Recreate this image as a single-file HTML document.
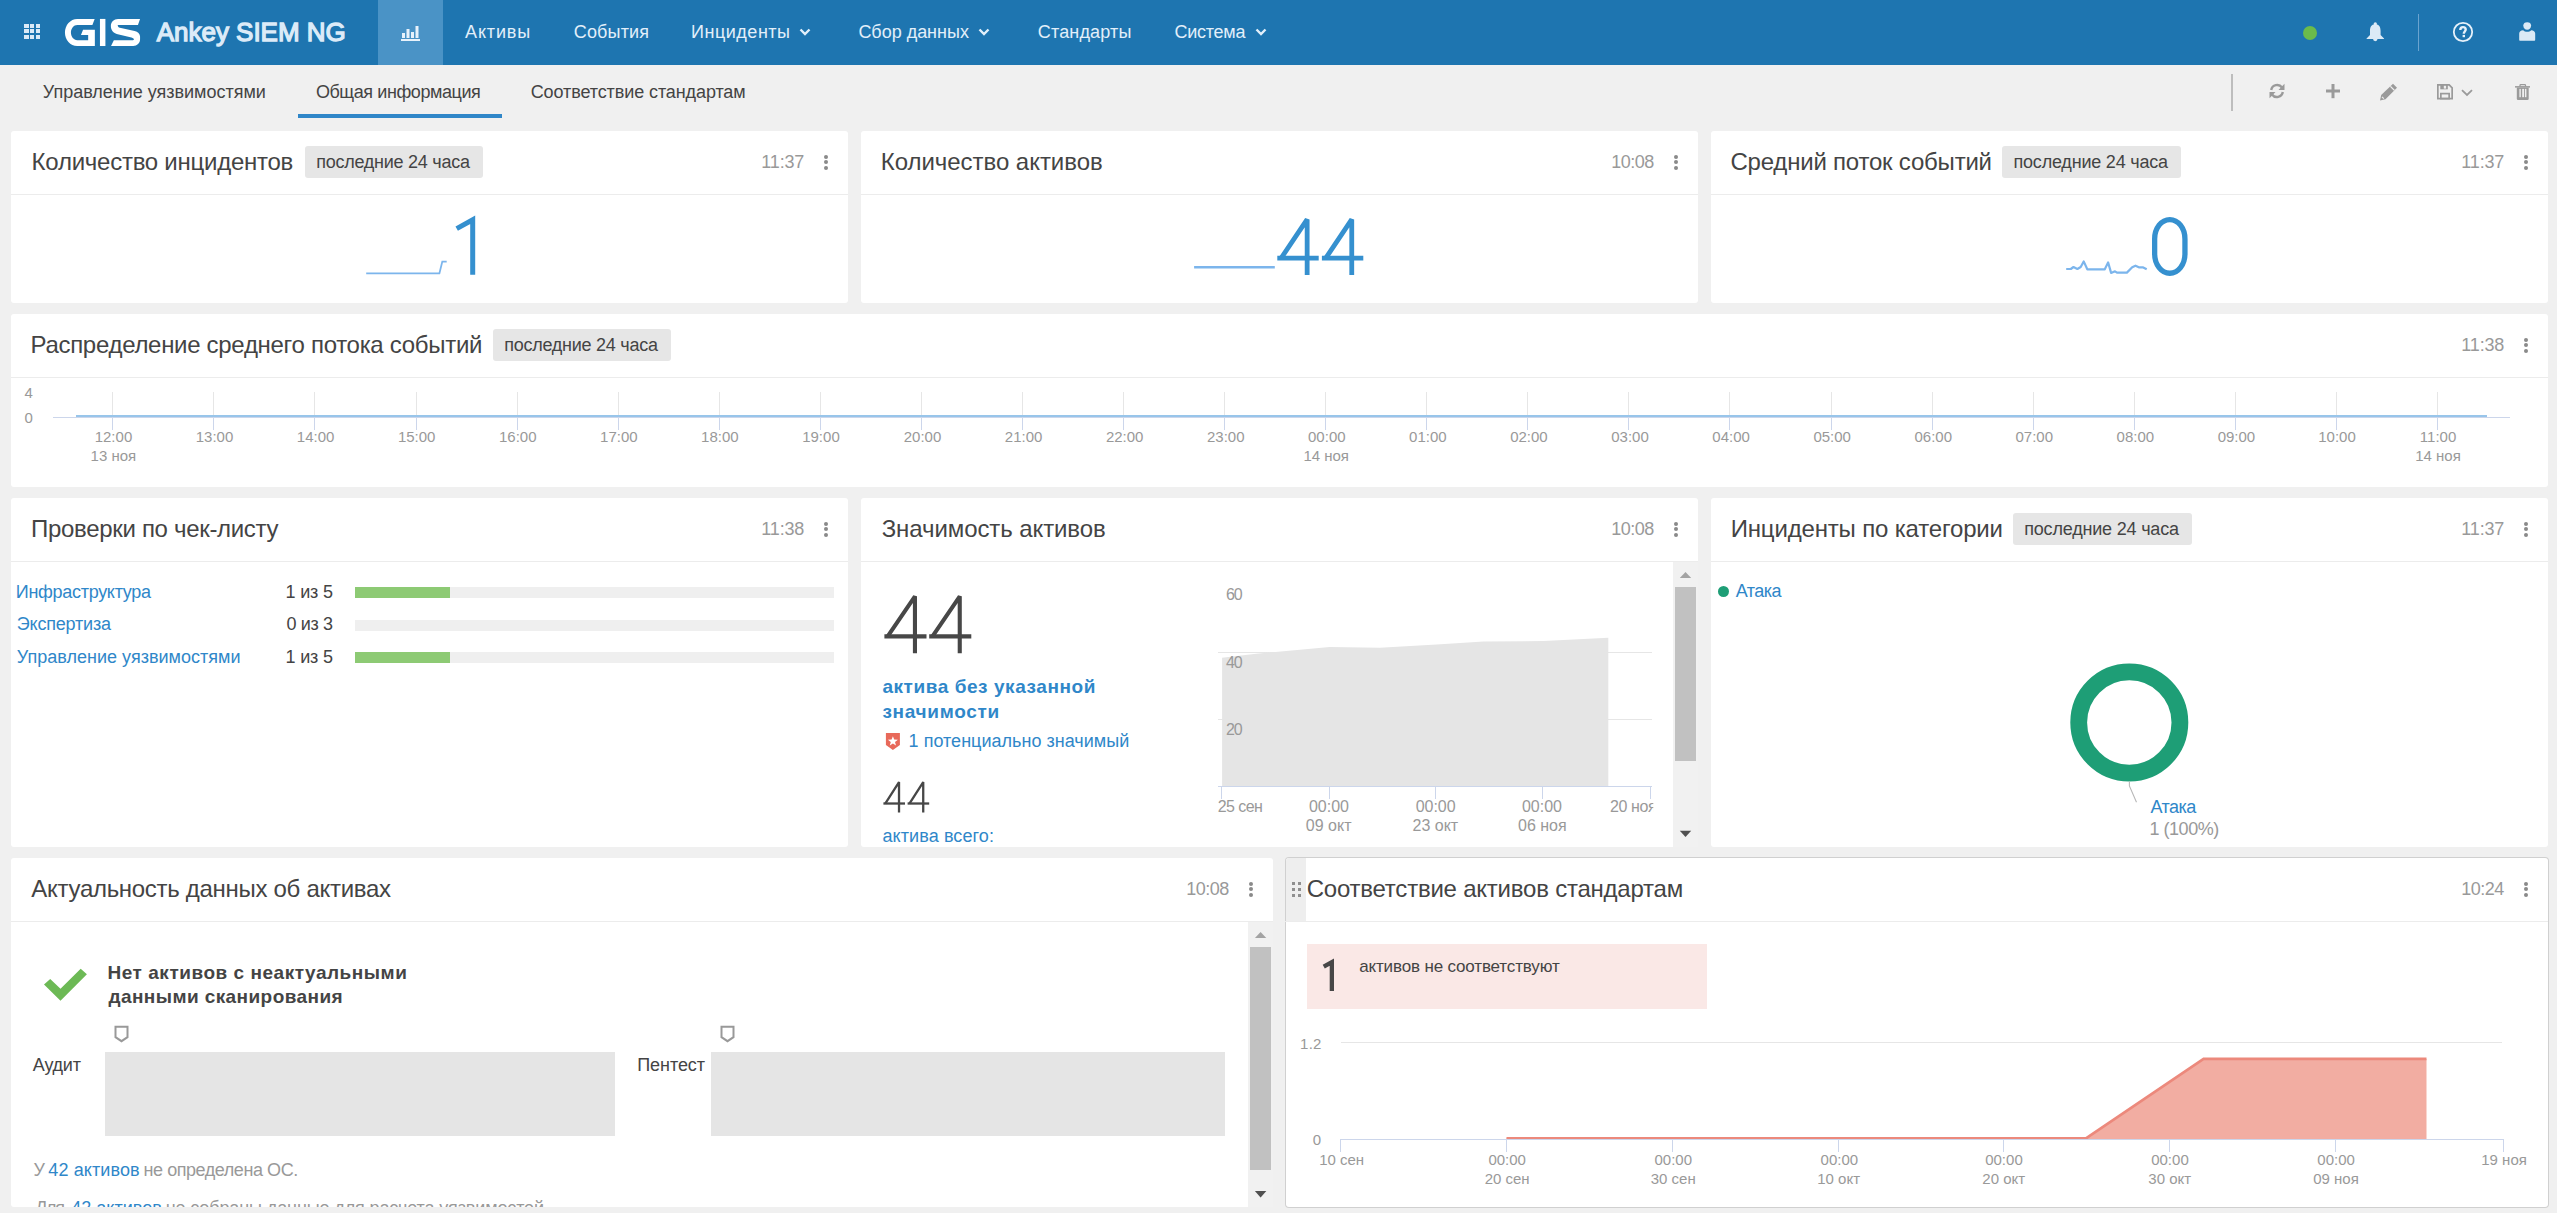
<!DOCTYPE html>
<html><head><meta charset="utf-8"><style>
html,body{margin:0;padding:0;}
body{width:2557px;height:1213px;overflow:hidden;background:#f0f0f0;position:relative;font-family:"Liberation Sans",sans-serif;}
.t{position:absolute;white-space:nowrap;}
svg{display:block}
</style></head><body>
<div style="position:absolute;left:0;top:0;width:2557px;height:65px;background:#1e75b0"></div><div style="position:absolute;left:24.0px;top:23.9px;width:4.6px;height:4px;background:#dbeaf7"></div><div style="position:absolute;left:24.0px;top:29.4px;width:4.6px;height:4px;background:#dbeaf7"></div><div style="position:absolute;left:24.0px;top:35.0px;width:4.6px;height:4px;background:#dbeaf7"></div><div style="position:absolute;left:29.9px;top:23.9px;width:4.6px;height:4px;background:#dbeaf7"></div><div style="position:absolute;left:29.9px;top:29.4px;width:4.6px;height:4px;background:#dbeaf7"></div><div style="position:absolute;left:29.9px;top:35.0px;width:4.6px;height:4px;background:#dbeaf7"></div><div style="position:absolute;left:35.8px;top:23.9px;width:4.6px;height:4px;background:#dbeaf7"></div><div style="position:absolute;left:35.8px;top:29.4px;width:4.6px;height:4px;background:#dbeaf7"></div><div style="position:absolute;left:35.8px;top:35.0px;width:4.6px;height:4px;background:#dbeaf7"></div><svg style="position:absolute;left:60px;top:14px" width="90" height="38" viewBox="0 0 2557 1080"><g fill="#fff">
<path d="M985,140 L490,140 C290,140 140,320 140,525 C140,740 290,910 490,910 L990,910 L990,450 L655,450 L595,600 L800,600 L800,745 L490,745 C390,745 310,640 310,525 C310,410 390,310 490,310 L920,310 Z"/>
<rect x="1135" y="140" width="155" height="770"/>
<path d="M2275,140 L1650,140 C1530,140 1445,230 1445,340 C1445,450 1510,540 1640,575 L2030,665 C2080,680 2100,700 2100,715 C2100,735 2085,745 2050,745 L1530,745 L1450,910 L2080,910 C2190,910 2275,830 2275,720 L2275,640 C2275,560 2210,500 2120,480 L1700,390 C1660,380 1640,350 1640,310 L2215,310 Z"/>
</g></svg><div style="position:absolute;left:378px;top:0;width:65px;height:65px;background:#4a93c6"></div><svg style="position:absolute;left:400px;top:24px" width="21" height="17" viewBox="0 0 21 17"><g fill="#e8f2fb">
<rect x="1" y="15" width="19" height="2"/><rect x="2" y="9" width="3" height="5"/><rect x="6.5" y="5" width="3" height="9"/><rect x="11" y="8" width="3" height="6"/><rect x="15.5" y="2" width="3" height="12"/></g></svg><svg style="position:absolute;left:799px;top:28px" width="12" height="9" viewBox="0 0 12 9"><path d="M1.5,1.5 L6,6 L10.5,1.5" fill="none" stroke="#e2effa" stroke-width="2.4"/></svg><svg style="position:absolute;left:978px;top:28px" width="12" height="9" viewBox="0 0 12 9"><path d="M1.5,1.5 L6,6 L10.5,1.5" fill="none" stroke="#e2effa" stroke-width="2.4"/></svg><svg style="position:absolute;left:1255.4px;top:28px" width="12" height="9" viewBox="0 0 12 9"><path d="M1.5,1.5 L6,6 L10.5,1.5" fill="none" stroke="#e2effa" stroke-width="2.4"/></svg><div style="position:absolute;left:2303px;top:25.5px;width:14px;height:14px;border-radius:50%;background:#6bbb4b"></div><svg style="position:absolute;left:2366px;top:21.9px" width="18.6" height="19.8" viewBox="0 0 20 22" preserveAspectRatio="none"><g fill="#dceaf6">
<circle cx="10" cy="2.2" r="1.8"/><path d="M10,2.5 C5.5,2.5 4.3,6 4.3,10 L4.3,14.5 L0.6,18.3 L0.6,19 L19.4,19 L19.4,18.3 L15.7,14.5 L15.7,10 C15.7,6 14.5,2.5 10,2.5 Z"/><path d="M7.6,19 A2.4,2.4 0 0 0 12.4,19 Z"/></g></svg><div style="position:absolute;left:2418px;top:14px;width:1px;height:37px;background:#6aa3cf"></div><svg style="position:absolute;left:2452px;top:20.5px" width="22" height="22" viewBox="0 0 22 22">
<circle cx="11" cy="11" r="9.2" fill="none" stroke="#e6f1fa" stroke-width="1.8"/>
<path d="M8.3,8.9 C8.3,7 9.5,6.1 11,6.1 C12.6,6.1 13.7,7.1 13.7,8.5 C13.7,10.4 11.8,10.6 11.8,12.8" fill="none" stroke="#e6f1fa" stroke-width="2.4"/>
<rect x="10.6" y="13.9" width="2.4" height="2.3" fill="#e6f1fa"/></svg><svg style="position:absolute;left:2518px;top:21px" width="18.4" height="20" viewBox="0 0 18.4 20"><g fill="#dceaf6">
<path d="M9.2,1.2 C11.6,1.2 13.1,2.3 13.1,4.6 C13.1,7.2 11.5,8.8 9.2,8.8 C6.9,8.8 5.3,7.2 5.3,4.6 C5.3,2.3 6.8,1.2 9.2,1.2 Z"/>
<path d="M1.2,12.5 C1.2,10.5 2.8,9.4 5.2,9.2 C6.2,10.2 7.6,10.8 9.2,10.8 C10.8,10.8 12.2,10.2 13.2,9.2 C15.6,9.4 17.2,10.5 17.2,12.5 L17.2,18.7 C17.2,19.4 16.8,19.7 16.2,19.7 L2.2,19.7 C1.6,19.7 1.2,19.4 1.2,18.7 Z"/></g></svg><div style="position:absolute;left:298px;top:114px;width:204px;height:4px;background:#2f86c8"></div><div style="position:absolute;left:2231px;top:74px;width:2px;height:37px;background:#bdbdbd"></div><svg style="position:absolute;left:2268px;top:82px" width="18" height="18" viewBox="0 0 18 18"><g fill="none" stroke="#9a9a9a" stroke-width="2.4">
<path d="M3.2,8 A6,6 0 0 1 14,5.5"/><path d="M14.8,10 A6,6 0 0 1 4,12.5"/></g><g fill="#9a9a9a"><path d="M16.5,1.8 L16.5,8 L10.5,8 Z"/><path d="M1.5,16.2 L1.5,10 L7.5,10 Z"/></g></svg><svg style="position:absolute;left:2325px;top:83px" width="16" height="16" viewBox="0 0 16 16"><g fill="#9a9a9a"><rect x="6.5" y="1" width="3" height="14.2"/><rect x="1" y="6.5" width="14" height="3"/></g></svg><svg style="position:absolute;left:2379px;top:83px" width="19" height="18" viewBox="0 0 19 18"><g fill="#9a9a9a">
<path d="M14,0.8 L18,4.8 L6.5,16.3 L1,17.5 L2.2,12 Z"/></g><path d="M3,13.8 L4.8,15.6" stroke="#f0f0f0" stroke-width="1.2"/><path d="M11.4,3.4 L15.4,7.4" stroke="#f0f0f0" stroke-width="1.3"/></svg><svg style="position:absolute;left:2437px;top:84.2px" width="16" height="15.5" viewBox="0 0 16 15.5"><g fill="none" stroke="#9a9a9a" stroke-width="1.7">
<path d="M0.85,0.85 L12.2,0.85 L15.15,3.8 L15.15,14.65 L0.85,14.65 Z"/><rect x="3.85" y="9.6" width="8.3" height="5"/></g><rect x="3.3" y="1" width="7.5" height="4.3" fill="#9a9a9a"/><rect x="6.8" y="1.8" width="2.3" height="2.8" fill="#f0f0f0"/></svg><svg style="position:absolute;left:2461px;top:89px" width="12" height="8" viewBox="0 0 12 8"><path d="M1,1.2 L6,6 L11,1.2" fill="none" stroke="#9a9a9a" stroke-width="1.8"/></svg><svg style="position:absolute;left:2514.5px;top:83.9px" width="15.5" height="16.1" viewBox="0 0 15.5 16.1"><g fill="#9a9a9a">
<rect x="0" y="2.1" width="15.5" height="1.5"/><path d="M1.8,3.5 L13.7,3.5 L13.7,14.8 Q13.7,16 12.5,16 L3,16 Q1.8,16 1.8,14.8 Z"/></g>
<path d="M5,2.4 L5,1.4 Q5,0.7 5.7,0.7 L9.8,0.7 Q10.5,0.7 10.5,1.4 L10.5,2.4" fill="none" stroke="#9a9a9a" stroke-width="1.3"/>
<g fill="#f0f0f0"><rect x="4.4" y="4.9" width="1.4" height="8.3"/><rect x="7.2" y="4.9" width="1.9" height="8.3"/><rect x="10" y="4.9" width="1.4" height="8.3"/></g></svg><div style="position:absolute;left:11px;top:131px;width:837px;height:172px;background:#fff;border-radius:3px;"></div><div style="position:absolute;left:861px;top:131px;width:837px;height:172px;background:#fff;border-radius:3px;"></div><div style="position:absolute;left:1711px;top:131px;width:837px;height:172px;background:#fff;border-radius:3px;"></div><div style="position:absolute;left:11px;top:194px;width:837px;height:1px;background:#ececec"></div><div style="position:absolute;left:305px;top:146px;width:178px;height:32px;background:#e6e6e6;border-radius:3px"></div><div style="position:absolute;left:824px;top:155px;width:4px;height:4px;border-radius:50%;background:#8a8a8a"></div><div style="position:absolute;left:824px;top:160.2px;width:4px;height:4px;border-radius:50%;background:#8a8a8a"></div><div style="position:absolute;left:824px;top:166.2px;width:4px;height:4px;border-radius:50%;background:#8a8a8a"></div><div style="position:absolute;left:861px;top:194px;width:837px;height:1px;background:#ececec"></div><div style="position:absolute;left:1674px;top:155px;width:4px;height:4px;border-radius:50%;background:#8a8a8a"></div><div style="position:absolute;left:1674px;top:160.2px;width:4px;height:4px;border-radius:50%;background:#8a8a8a"></div><div style="position:absolute;left:1674px;top:166.2px;width:4px;height:4px;border-radius:50%;background:#8a8a8a"></div><div style="position:absolute;left:1711px;top:194px;width:837px;height:1px;background:#ececec"></div><div style="position:absolute;left:2002.3px;top:146px;width:178.70000000000005px;height:32px;background:#e6e6e6;border-radius:3px"></div><div style="position:absolute;left:2524px;top:155px;width:4px;height:4px;border-radius:50%;background:#8a8a8a"></div><div style="position:absolute;left:2524px;top:160.2px;width:4px;height:4px;border-radius:50%;background:#8a8a8a"></div><div style="position:absolute;left:2524px;top:166.2px;width:4px;height:4px;border-radius:50%;background:#8a8a8a"></div><div style="position:absolute;left:11px;top:314px;width:2537px;height:173px;background:#fff;border-radius:3px;"></div><div style="position:absolute;left:11px;top:377px;width:2537px;height:1px;background:#ececec"></div><div style="position:absolute;left:493px;top:329px;width:178px;height:32px;background:#e6e6e6;border-radius:3px"></div><div style="position:absolute;left:2524px;top:338px;width:4px;height:4px;border-radius:50%;background:#8a8a8a"></div><div style="position:absolute;left:2524px;top:343.2px;width:4px;height:4px;border-radius:50%;background:#8a8a8a"></div><div style="position:absolute;left:2524px;top:349.2px;width:4px;height:4px;border-radius:50%;background:#8a8a8a"></div><div style="position:absolute;left:11px;top:498px;width:837px;height:349px;background:#fff;border-radius:3px;"></div><div style="position:absolute;left:861px;top:498px;width:837px;height:349px;background:#fff;border-radius:3px;"></div><div style="position:absolute;left:1711px;top:498px;width:837px;height:349px;background:#fff;border-radius:3px;"></div><div style="position:absolute;left:11px;top:561px;width:837px;height:1px;background:#ececec"></div><div style="position:absolute;left:824px;top:522px;width:4px;height:4px;border-radius:50%;background:#8a8a8a"></div><div style="position:absolute;left:824px;top:527.2px;width:4px;height:4px;border-radius:50%;background:#8a8a8a"></div><div style="position:absolute;left:824px;top:533.2px;width:4px;height:4px;border-radius:50%;background:#8a8a8a"></div><div style="position:absolute;left:861px;top:561px;width:837px;height:1px;background:#ececec"></div><div style="position:absolute;left:1674px;top:522px;width:4px;height:4px;border-radius:50%;background:#8a8a8a"></div><div style="position:absolute;left:1674px;top:527.2px;width:4px;height:4px;border-radius:50%;background:#8a8a8a"></div><div style="position:absolute;left:1674px;top:533.2px;width:4px;height:4px;border-radius:50%;background:#8a8a8a"></div><div style="position:absolute;left:1711px;top:561px;width:837px;height:1px;background:#ececec"></div><div style="position:absolute;left:2013px;top:513px;width:179px;height:32px;background:#e6e6e6;border-radius:3px"></div><div style="position:absolute;left:2524px;top:522px;width:4px;height:4px;border-radius:50%;background:#8a8a8a"></div><div style="position:absolute;left:2524px;top:527.2px;width:4px;height:4px;border-radius:50%;background:#8a8a8a"></div><div style="position:absolute;left:2524px;top:533.2px;width:4px;height:4px;border-radius:50%;background:#8a8a8a"></div><div style="position:absolute;left:11px;top:858px;width:1262px;height:349px;background:#fff;border-radius:3px;"></div><div style="position:absolute;left:11px;top:921px;width:1262px;height:1px;background:#ececec"></div><div style="position:absolute;left:1249px;top:882px;width:4px;height:4px;border-radius:50%;background:#8a8a8a"></div><div style="position:absolute;left:1249px;top:887.2px;width:4px;height:4px;border-radius:50%;background:#8a8a8a"></div><div style="position:absolute;left:1249px;top:893.2px;width:4px;height:4px;border-radius:50%;background:#8a8a8a"></div><div style="position:absolute;left:1286px;top:858px;width:1262px;height:349px;background:#fff;border-radius:3px;box-shadow:0 0 0 1px #d0d0d0;"></div><div style="position:absolute;left:1286px;top:858px;width:20px;height:63px;background:#eeeeee;border-top-left-radius:3px"></div><div style="position:absolute;left:1292px;top:882px;width:3px;height:3px;background:#8f8f8f"></div><div style="position:absolute;left:1292px;top:888px;width:3px;height:3px;background:#8f8f8f"></div><div style="position:absolute;left:1292px;top:894px;width:3px;height:3px;background:#8f8f8f"></div><div style="position:absolute;left:1298px;top:882px;width:3px;height:3px;background:#8f8f8f"></div><div style="position:absolute;left:1298px;top:888px;width:3px;height:3px;background:#8f8f8f"></div><div style="position:absolute;left:1298px;top:894px;width:3px;height:3px;background:#8f8f8f"></div><div style="position:absolute;left:1285px;top:921px;width:1263px;height:1px;background:#ececec"></div><div style="position:absolute;left:2524px;top:882px;width:4px;height:4px;border-radius:50%;background:#8a8a8a"></div><div style="position:absolute;left:2524px;top:887.2px;width:4px;height:4px;border-radius:50%;background:#8a8a8a"></div><div style="position:absolute;left:2524px;top:893.2px;width:4px;height:4px;border-radius:50%;background:#8a8a8a"></div><svg style="position:absolute;left:0;top:0;overflow:visible" width="1" height="1"><path d="M366.2,273.4 L439.4,273.4 L442.3,261.6 L446.7,261.6" fill="none" stroke="#7cb5ec" stroke-width="1.8"/><path d="M472.70,274.80 L472.70,219.70 L456.70,228.64" fill="none" stroke="#3590cf" stroke-width="5.0"/></svg><svg style="position:absolute;left:0;top:0;overflow:visible" width="1" height="1"><path d="M1194.1,267.3 L1274.8,267.3" fill="none" stroke="#7cb5ec" stroke-width="2.6"/><path d="M1307.15,274.90 L1307.15,219.40 L1281.14,258.16" fill="none" stroke="#3590cf" stroke-width="4.8" stroke-linejoin="bevel"/><path d="M1277.30,258.16 L1318.70,258.16" fill="none" stroke="#3590cf" stroke-width="4.8"/><path d="M1351.75,274.90 L1351.75,219.40 L1325.74,258.16" fill="none" stroke="#3590cf" stroke-width="4.8" stroke-linejoin="bevel"/><path d="M1321.90,258.16 L1363.30,258.16" fill="none" stroke="#3590cf" stroke-width="4.8"/></svg><svg style="position:absolute;left:0;top:0;overflow:visible" width="1" height="1"><path d="M2066.2,269.0 L2070.8,269.0 L2073.5,267.0 L2077.4,269.0 L2080.7,267.0 L2083.7,261.4 L2087.3,269.3 L2104.8,269.3 L2108.1,262.4 L2111.1,272.9 L2115.0,271.3 L2117.0,272.6 L2126.9,272.6 L2132.2,267.3 L2135.5,265.7 L2138.8,267.3 L2142.7,267.3 L2146.7,269.3" fill="none" stroke="#7cb5ec" stroke-width="2.2" stroke-linejoin="round"/><rect x="2154.65" y="219.55" width="30.30" height="53.70" rx="15.15" ry="19.33" fill="none" stroke="#3590cf" stroke-width="5.3"/></svg><div style="position:absolute;left:53px;top:417px;width:2457px;height:1px;background:#ccd6eb"></div><div style="position:absolute;left:112.3px;top:392px;width:1px;height:25px;background:#e6e6e6"></div><div style="position:absolute;left:112.3px;top:417px;width:1px;height:12.5px;background:#ccd6eb"></div><div style="position:absolute;left:213.4px;top:392px;width:1px;height:25px;background:#e6e6e6"></div><div style="position:absolute;left:213.4px;top:417px;width:1px;height:12.5px;background:#ccd6eb"></div><div style="position:absolute;left:314.4px;top:392px;width:1px;height:25px;background:#e6e6e6"></div><div style="position:absolute;left:314.4px;top:417px;width:1px;height:12.5px;background:#ccd6eb"></div><div style="position:absolute;left:415.5px;top:392px;width:1px;height:25px;background:#e6e6e6"></div><div style="position:absolute;left:415.5px;top:417px;width:1px;height:12.5px;background:#ccd6eb"></div><div style="position:absolute;left:516.6px;top:392px;width:1px;height:25px;background:#e6e6e6"></div><div style="position:absolute;left:516.6px;top:417px;width:1px;height:12.5px;background:#ccd6eb"></div><div style="position:absolute;left:617.6px;top:392px;width:1px;height:25px;background:#e6e6e6"></div><div style="position:absolute;left:617.6px;top:417px;width:1px;height:12.5px;background:#ccd6eb"></div><div style="position:absolute;left:718.7px;top:392px;width:1px;height:25px;background:#e6e6e6"></div><div style="position:absolute;left:718.7px;top:417px;width:1px;height:12.5px;background:#ccd6eb"></div><div style="position:absolute;left:819.8px;top:392px;width:1px;height:25px;background:#e6e6e6"></div><div style="position:absolute;left:819.8px;top:417px;width:1px;height:12.5px;background:#ccd6eb"></div><div style="position:absolute;left:920.9px;top:392px;width:1px;height:25px;background:#e6e6e6"></div><div style="position:absolute;left:920.9px;top:417px;width:1px;height:12.5px;background:#ccd6eb"></div><div style="position:absolute;left:1021.9px;top:392px;width:1px;height:25px;background:#e6e6e6"></div><div style="position:absolute;left:1021.9px;top:417px;width:1px;height:12.5px;background:#ccd6eb"></div><div style="position:absolute;left:1123.0px;top:392px;width:1px;height:25px;background:#e6e6e6"></div><div style="position:absolute;left:1123.0px;top:417px;width:1px;height:12.5px;background:#ccd6eb"></div><div style="position:absolute;left:1224.1px;top:392px;width:1px;height:25px;background:#e6e6e6"></div><div style="position:absolute;left:1224.1px;top:417px;width:1px;height:12.5px;background:#ccd6eb"></div><div style="position:absolute;left:1325.1px;top:392px;width:1px;height:25px;background:#e6e6e6"></div><div style="position:absolute;left:1325.1px;top:417px;width:1px;height:12.5px;background:#ccd6eb"></div><div style="position:absolute;left:1426.2px;top:392px;width:1px;height:25px;background:#e6e6e6"></div><div style="position:absolute;left:1426.2px;top:417px;width:1px;height:12.5px;background:#ccd6eb"></div><div style="position:absolute;left:1527.3px;top:392px;width:1px;height:25px;background:#e6e6e6"></div><div style="position:absolute;left:1527.3px;top:417px;width:1px;height:12.5px;background:#ccd6eb"></div><div style="position:absolute;left:1628.3px;top:392px;width:1px;height:25px;background:#e6e6e6"></div><div style="position:absolute;left:1628.3px;top:417px;width:1px;height:12.5px;background:#ccd6eb"></div><div style="position:absolute;left:1729.4px;top:392px;width:1px;height:25px;background:#e6e6e6"></div><div style="position:absolute;left:1729.4px;top:417px;width:1px;height:12.5px;background:#ccd6eb"></div><div style="position:absolute;left:1830.5px;top:392px;width:1px;height:25px;background:#e6e6e6"></div><div style="position:absolute;left:1830.5px;top:417px;width:1px;height:12.5px;background:#ccd6eb"></div><div style="position:absolute;left:1931.6px;top:392px;width:1px;height:25px;background:#e6e6e6"></div><div style="position:absolute;left:1931.6px;top:417px;width:1px;height:12.5px;background:#ccd6eb"></div><div style="position:absolute;left:2032.6px;top:392px;width:1px;height:25px;background:#e6e6e6"></div><div style="position:absolute;left:2032.6px;top:417px;width:1px;height:12.5px;background:#ccd6eb"></div><div style="position:absolute;left:2133.7px;top:392px;width:1px;height:25px;background:#e6e6e6"></div><div style="position:absolute;left:2133.7px;top:417px;width:1px;height:12.5px;background:#ccd6eb"></div><div style="position:absolute;left:2234.8px;top:392px;width:1px;height:25px;background:#e6e6e6"></div><div style="position:absolute;left:2234.8px;top:417px;width:1px;height:12.5px;background:#ccd6eb"></div><div style="position:absolute;left:2335.8px;top:392px;width:1px;height:25px;background:#e6e6e6"></div><div style="position:absolute;left:2335.8px;top:417px;width:1px;height:12.5px;background:#ccd6eb"></div><div style="position:absolute;left:2436.9px;top:392px;width:1px;height:25px;background:#e6e6e6"></div><div style="position:absolute;left:2436.9px;top:417px;width:1px;height:12.5px;background:#ccd6eb"></div><div style="position:absolute;left:75.8px;top:415.2px;width:2410.8px;height:2.2px;background:#98c5ea"></div><div style="position:absolute;left:355px;top:587.3px;width:479px;height:11.2px;background:#efefef"></div><div style="position:absolute;left:355px;top:587.3px;width:95px;height:11.2px;background:#8dca74"></div><div style="position:absolute;left:355px;top:619.6px;width:479px;height:11.2px;background:#efefef"></div><div style="position:absolute;left:355px;top:652.2px;width:479px;height:11.2px;background:#efefef"></div><div style="position:absolute;left:355px;top:652.2px;width:95px;height:11.2px;background:#8dca74"></div><div style="position:absolute;left:1673px;top:562px;width:25px;height:285px;background:#f1f1f1"></div><div style="position:absolute;left:1675px;top:587px;width:21px;height:174px;background:#c1c1c1"></div><svg style="position:absolute;left:0;top:0;overflow:visible" width="1" height="1"><path d="M1679.8,578 L1685.5,572 L1691.2,578 Z" fill="#a3a3a3"/><path d="M1679.8,830.7 L1685.5,837.1 L1691.2,830.7 Z" fill="#505050"/></svg><svg style="position:absolute;left:0;top:0;overflow:visible" width="1" height="1"><path d="M914.95,653.20 L914.95,596.35 L887.68,636.35" fill="none" stroke="#474747" stroke-width="4.1" stroke-linejoin="bevel"/><path d="M884.40,636.35 L926.50,636.35" fill="none" stroke="#474747" stroke-width="4.1"/><path d="M959.75,653.20 L959.75,596.35 L932.48,636.35" fill="none" stroke="#474747" stroke-width="4.1" stroke-linejoin="bevel"/><path d="M929.20,636.35 L971.30,636.35" fill="none" stroke="#474747" stroke-width="4.1"/><path d="M899.02,812.60 L899.02,782.05 L885.24,803.51" fill="none" stroke="#474747" stroke-width="2.3" stroke-linejoin="bevel"/><path d="M883.40,803.51 L905.00,803.51" fill="none" stroke="#474747" stroke-width="2.3"/><path d="M923.23,812.60 L923.23,782.05 L909.44,803.51" fill="none" stroke="#474747" stroke-width="2.3" stroke-linejoin="bevel"/><path d="M907.60,803.51 L929.20,803.51" fill="none" stroke="#474747" stroke-width="2.3"/></svg><svg style="position:absolute;left:0;top:0;overflow:visible" width="1" height="1"><path d="M885.9,733.1 L899.9,733.1 L899.9,745 L892.9,750 L885.9,745 Z" fill="#e8695a"/><path d="M892.9,736.2 L894.2,739.6 L897.9,739.8 L895,742.1 L896,745.6 L892.9,743.6 L889.8,745.6 L890.8,742.1 L887.9,739.8 L891.6,739.6 Z" fill="#fff"/></svg><div style="position:absolute;left:1217.8px;top:651.7px;width:434.6px;height:1px;background:#e6e6e6"></div><div style="position:absolute;left:1217.8px;top:718.9px;width:434.6px;height:1px;background:#e6e6e6"></div><svg style="position:absolute;left:0;top:0;overflow:visible" width="1" height="1"><path d="M1222.1,786.6 L1222.1,657.8 L1256.2,653.8 L1329.7,647.1 L1379.9,647.8 L1436.7,644.5 L1483.6,641.5 L1543.7,641.1 L1608.3,637.8 L1608.3,786.6 Z" fill="#e5e5e5"/></svg><div style="position:absolute;left:1217.8px;top:786px;width:434.6px;height:1.4px;background:#ccd6eb"></div><div style="position:absolute;left:1220.5px;top:786.6px;width:1px;height:12.4px;background:#ccd6eb"></div><div style="position:absolute;left:1328.5px;top:786.6px;width:1px;height:12.4px;background:#ccd6eb"></div><div style="position:absolute;left:1435.2px;top:786.6px;width:1px;height:12.4px;background:#ccd6eb"></div><div style="position:absolute;left:1541.5px;top:786.6px;width:1px;height:12.4px;background:#ccd6eb"></div><div style="position:absolute;left:1650.2px;top:786.6px;width:1px;height:12.4px;background:#ccd6eb"></div><div style="position:absolute;left:1717.8px;top:586px;width:11.2px;height:11.2px;border-radius:50%;background:#1e9e76"></div><svg style="position:absolute;left:0;top:0;overflow:visible" width="1" height="1"><circle cx="2129.3" cy="722.5" r="50.6" fill="none" stroke="#1e9e76" stroke-width="16.8"/><path d="M2129.4,781.6 L2129.4,786 L2136.5,802.2" fill="none" stroke="#b8b8b8" stroke-width="1.1"/></svg><div style="position:absolute;left:1248px;top:922px;width:25px;height:285px;background:#f1f1f1"></div><div style="position:absolute;left:1250px;top:947px;width:21px;height:223.4px;background:#c1c1c1"></div><svg style="position:absolute;left:0;top:0;overflow:visible" width="1" height="1"><path d="M1254.9,938 L1260.6,932 L1266.3,938 Z" fill="#a3a3a3"/><path d="M1254.9,1191 L1260.6,1197.6 L1266.3,1191 Z" fill="#505050"/></svg><svg style="position:absolute;left:0;top:0;overflow:visible" width="1" height="1"><path d="M44.0,984.6 L50.2,978.9 L60.5,988.7 L80.7,968.8 L86.9,974.3 L60.5,1000.7 Z" fill="#6cb955"/></svg><svg style="position:absolute;left:0;top:0;overflow:visible" width="1" height="1"><path d="M115.5,1026.8 L127.5,1026.8 L127.5,1037.2 L121.5,1041.2 L115.5,1037.2 Z" fill="none" stroke="#999" stroke-width="2"/></svg><svg style="position:absolute;left:0;top:0;overflow:visible" width="1" height="1"><path d="M721.5,1026.8 L733.5,1026.8 L733.5,1037.2 L727.5,1041.2 L721.5,1037.2 Z" fill="none" stroke="#999" stroke-width="2"/></svg><div style="position:absolute;left:105px;top:1052px;width:509.5px;height:84px;background:#e5e5e5"></div><div style="position:absolute;left:711.4px;top:1052px;width:513.6px;height:84px;background:#e5e5e5"></div><div style="position:absolute;left:1307px;top:944px;width:400px;height:64.8px;background:#fae8e6"></div><svg style="position:absolute;left:0;top:0;overflow:visible" width="1" height="1"><path d="M1331.85,990.90 L1331.85,962.05 L1323.75,966.59" fill="none" stroke="#474747" stroke-width="4.3"/></svg><div style="position:absolute;left:1341px;top:1042.3px;width:1161px;height:1px;background:#e6e6e6"></div><svg style="position:absolute;left:0;top:0;overflow:visible" width="1" height="1"><path d="M1506.5,1139.4 L1506.5,1138.2 L2086.3,1138.2 L2203.6,1058.9 L2426.5,1058.9 L2426.5,1139.4 Z" fill="#f2ada2"/><path d="M1506.5,1138.2 L2086.3,1138.2 L2203.6,1058.9 L2426.5,1058.9" fill="none" stroke="#ec897c" stroke-width="2.6"/></svg><div style="position:absolute;left:1340.5px;top:1138.8px;width:1162.5px;height:1.3px;background:#ccd6eb"></div><div style="position:absolute;left:1340.0px;top:1139.4px;width:1px;height:12.6px;background:#ccd6eb"></div><div style="position:absolute;left:1506.0px;top:1139.4px;width:1px;height:12.6px;background:#ccd6eb"></div><div style="position:absolute;left:1672.1px;top:1139.4px;width:1px;height:12.6px;background:#ccd6eb"></div><div style="position:absolute;left:1838.2px;top:1139.4px;width:1px;height:12.6px;background:#ccd6eb"></div><div style="position:absolute;left:2002.8px;top:1139.4px;width:1px;height:12.6px;background:#ccd6eb"></div><div style="position:absolute;left:2168.8px;top:1139.4px;width:1px;height:12.6px;background:#ccd6eb"></div><div style="position:absolute;left:2334.9px;top:1139.4px;width:1px;height:12.6px;background:#ccd6eb"></div><div style="position:absolute;left:2502.5px;top:1139.4px;width:1px;height:12.6px;background:#ccd6eb"></div>
<div class="t" style="left:156.80px;top:19.39px;font-size:26px;line-height:26px;font-weight:400;color:#dcebf8;letter-spacing:-0.029px;-webkit-text-stroke:1.3px #dcebf8;">Ankey SIEM NG</div><div class="t" style="left:465.10px;top:22.76px;font-size:18px;line-height:18px;font-weight:400;color:#e2effa;letter-spacing:0.831px;">Активы</div><div class="t" style="left:573.80px;top:22.76px;font-size:18px;line-height:18px;font-weight:400;color:#e2effa;letter-spacing:0.157px;">События</div><div class="t" style="left:691.00px;top:22.76px;font-size:18px;line-height:18px;font-weight:400;color:#e2effa;letter-spacing:0.520px;">Инциденты</div><div class="t" style="left:858.40px;top:22.76px;font-size:18px;line-height:18px;font-weight:400;color:#e2effa;letter-spacing:-0.016px;">Сбор данных</div><div class="t" style="left:1037.80px;top:22.76px;font-size:18px;line-height:18px;font-weight:400;color:#e2effa;letter-spacing:0.154px;">Стандарты</div><div class="t" style="left:1174.50px;top:22.76px;font-size:18px;line-height:18px;font-weight:400;color:#e2effa;letter-spacing:-0.264px;">Система</div><div class="t" style="left:42.80px;top:82.66px;font-size:18px;line-height:18px;font-weight:400;color:#444;letter-spacing:-0.011px;">Управление уязвимостями</div><div class="t" style="left:315.90px;top:82.66px;font-size:18px;line-height:18px;font-weight:400;color:#444;letter-spacing:-0.417px;">Общая информация</div><div class="t" style="left:530.70px;top:82.66px;font-size:18px;line-height:18px;font-weight:400;color:#444;letter-spacing:-0.097px;">Соответствие стандартам</div><div class="t" style="left:31.60px;top:149.68px;font-size:24px;line-height:24px;font-weight:400;color:#444;letter-spacing:-0.252px;">Количество инцидентов</div><div class="t" style="left:316.20px;top:152.76px;font-size:18px;line-height:18px;font-weight:400;color:#444;letter-spacing:-0.250px;">последние 24 часа</div><div class="t" style="left:761.30px;top:152.96px;font-size:18px;line-height:18px;font-weight:400;color:#999;letter-spacing:-0.174px;">11:37</div><div class="t" style="left:880.70px;top:149.68px;font-size:24px;line-height:24px;font-weight:400;color:#444;letter-spacing:-0.035px;">Количество активов</div><div class="t" style="left:1611.30px;top:152.96px;font-size:18px;line-height:18px;font-weight:400;color:#999;letter-spacing:-0.508px;">10:08</div><div class="t" style="left:1730.50px;top:149.68px;font-size:24px;line-height:24px;font-weight:400;color:#444;letter-spacing:-0.210px;">Средний поток событий</div><div class="t" style="left:2013.50px;top:152.76px;font-size:18px;line-height:18px;font-weight:400;color:#444;letter-spacing:-0.206px;">последние 24 часа</div><div class="t" style="left:2461.30px;top:152.96px;font-size:18px;line-height:18px;font-weight:400;color:#999;letter-spacing:-0.174px;">11:37</div><div class="t" style="left:30.50px;top:332.68px;font-size:24px;line-height:24px;font-weight:400;color:#444;letter-spacing:-0.299px;">Распределение среднего потока событий</div><div class="t" style="left:504.20px;top:335.76px;font-size:18px;line-height:18px;font-weight:400;color:#444;letter-spacing:-0.250px;">последние 24 часа</div><div class="t" style="left:2461.30px;top:335.96px;font-size:18px;line-height:18px;font-weight:400;color:#999;letter-spacing:-0.174px;">11:38</div><div class="t" style="left:31.00px;top:516.68px;font-size:24px;line-height:24px;font-weight:400;color:#444;letter-spacing:-0.311px;">Проверки по чек-листу</div><div class="t" style="left:761.30px;top:519.96px;font-size:18px;line-height:18px;font-weight:400;color:#999;letter-spacing:-0.174px;">11:38</div><div class="t" style="left:881.70px;top:516.68px;font-size:24px;line-height:24px;font-weight:400;color:#444;letter-spacing:-0.090px;">Значимость активов</div><div class="t" style="left:1611.30px;top:519.96px;font-size:18px;line-height:18px;font-weight:400;color:#999;letter-spacing:-0.508px;">10:08</div><div class="t" style="left:1730.70px;top:516.68px;font-size:24px;line-height:24px;font-weight:400;color:#444;letter-spacing:-0.168px;">Инциденты по категории</div><div class="t" style="left:2024.20px;top:519.76px;font-size:18px;line-height:18px;font-weight:400;color:#444;letter-spacing:-0.187px;">последние 24 часа</div><div class="t" style="left:2461.30px;top:519.96px;font-size:18px;line-height:18px;font-weight:400;color:#999;letter-spacing:-0.174px;">11:37</div><div class="t" style="left:31.30px;top:876.68px;font-size:24px;line-height:24px;font-weight:400;color:#444;letter-spacing:-0.296px;">Актуальность данных об активах</div><div class="t" style="left:1186.30px;top:879.96px;font-size:18px;line-height:18px;font-weight:400;color:#999;letter-spacing:-0.508px;">10:08</div><div class="t" style="left:1306.70px;top:876.68px;font-size:24px;line-height:24px;font-weight:400;color:#444;letter-spacing:-0.225px;">Соответствие активов стандартам</div><div class="t" style="left:2461.30px;top:879.96px;font-size:18px;line-height:18px;font-weight:400;color:#999;letter-spacing:-0.508px;">10:24</div><div class="t" style="left:94.70px;top:429.30px;font-size:15px;line-height:15px;font-weight:400;color:#999;letter-spacing:0.000px;">12:00</div><div class="t" style="left:90.56px;top:448.20px;font-size:15px;line-height:15px;font-weight:400;color:#999;letter-spacing:0.000px;">13 ноя</div><div class="t" style="left:195.77px;top:429.30px;font-size:15px;line-height:15px;font-weight:400;color:#999;letter-spacing:0.000px;">13:00</div><div class="t" style="left:296.84px;top:429.30px;font-size:15px;line-height:15px;font-weight:400;color:#999;letter-spacing:0.000px;">14:00</div><div class="t" style="left:397.91px;top:429.30px;font-size:15px;line-height:15px;font-weight:400;color:#999;letter-spacing:0.000px;">15:00</div><div class="t" style="left:498.98px;top:429.30px;font-size:15px;line-height:15px;font-weight:400;color:#999;letter-spacing:0.000px;">16:00</div><div class="t" style="left:600.05px;top:429.30px;font-size:15px;line-height:15px;font-weight:400;color:#999;letter-spacing:0.000px;">17:00</div><div class="t" style="left:701.12px;top:429.30px;font-size:15px;line-height:15px;font-weight:400;color:#999;letter-spacing:0.000px;">18:00</div><div class="t" style="left:802.19px;top:429.30px;font-size:15px;line-height:15px;font-weight:400;color:#999;letter-spacing:0.000px;">19:00</div><div class="t" style="left:903.76px;top:429.30px;font-size:15px;line-height:15px;font-weight:400;color:#999;letter-spacing:0.000px;">20:00</div><div class="t" style="left:1004.83px;top:429.30px;font-size:15px;line-height:15px;font-weight:400;color:#999;letter-spacing:0.000px;">21:00</div><div class="t" style="left:1105.90px;top:429.30px;font-size:15px;line-height:15px;font-weight:400;color:#999;letter-spacing:0.000px;">22:00</div><div class="t" style="left:1206.97px;top:429.30px;font-size:15px;line-height:15px;font-weight:400;color:#999;letter-spacing:0.000px;">23:00</div><div class="t" style="left:1308.04px;top:429.30px;font-size:15px;line-height:15px;font-weight:400;color:#999;letter-spacing:0.000px;">00:00</div><div class="t" style="left:1303.40px;top:448.20px;font-size:15px;line-height:15px;font-weight:400;color:#999;letter-spacing:0.000px;">14 ноя</div><div class="t" style="left:1409.11px;top:429.30px;font-size:15px;line-height:15px;font-weight:400;color:#999;letter-spacing:0.000px;">01:00</div><div class="t" style="left:1510.18px;top:429.30px;font-size:15px;line-height:15px;font-weight:400;color:#999;letter-spacing:0.000px;">02:00</div><div class="t" style="left:1611.25px;top:429.30px;font-size:15px;line-height:15px;font-weight:400;color:#999;letter-spacing:0.000px;">03:00</div><div class="t" style="left:1712.32px;top:429.30px;font-size:15px;line-height:15px;font-weight:400;color:#999;letter-spacing:0.000px;">04:00</div><div class="t" style="left:1813.39px;top:429.30px;font-size:15px;line-height:15px;font-weight:400;color:#999;letter-spacing:0.000px;">05:00</div><div class="t" style="left:1914.46px;top:429.30px;font-size:15px;line-height:15px;font-weight:400;color:#999;letter-spacing:0.000px;">06:00</div><div class="t" style="left:2015.53px;top:429.30px;font-size:15px;line-height:15px;font-weight:400;color:#999;letter-spacing:0.000px;">07:00</div><div class="t" style="left:2116.60px;top:429.30px;font-size:15px;line-height:15px;font-weight:400;color:#999;letter-spacing:0.000px;">08:00</div><div class="t" style="left:2217.67px;top:429.30px;font-size:15px;line-height:15px;font-weight:400;color:#999;letter-spacing:0.000px;">09:00</div><div class="t" style="left:2318.24px;top:429.30px;font-size:15px;line-height:15px;font-weight:400;color:#999;letter-spacing:0.000px;">10:00</div><div class="t" style="left:2419.87px;top:429.30px;font-size:15px;line-height:15px;font-weight:400;color:#999;letter-spacing:0.000px;">11:00</div><div class="t" style="left:2415.17px;top:448.20px;font-size:15px;line-height:15px;font-weight:400;color:#999;letter-spacing:0.000px;">14 ноя</div><div class="t" style="left:24.60px;top:385.40px;font-size:15px;line-height:15px;font-weight:400;color:#999;letter-spacing:0.000px;">4</div><div class="t" style="left:24.60px;top:409.50px;font-size:15px;line-height:15px;font-weight:400;color:#999;letter-spacing:0.000px;">0</div><div class="t" style="left:15.80px;top:583.06px;font-size:18px;line-height:18px;font-weight:400;color:#2f87c9;letter-spacing:-0.300px;">Инфраструктура</div><div class="t" style="left:285.60px;top:583.06px;font-size:18px;line-height:18px;font-weight:400;color:#444;letter-spacing:-0.184px;">1 из 5</div><div class="t" style="left:16.80px;top:615.36px;font-size:18px;line-height:18px;font-weight:400;color:#2f87c9;letter-spacing:-0.193px;">Экспертиза</div><div class="t" style="left:286.60px;top:615.36px;font-size:18px;line-height:18px;font-weight:400;color:#444;letter-spacing:-0.384px;">0 из 3</div><div class="t" style="left:16.80px;top:647.96px;font-size:18px;line-height:18px;font-weight:400;color:#2f87c9;letter-spacing:0.021px;">Управление уязвимостями</div><div class="t" style="left:285.60px;top:647.96px;font-size:18px;line-height:18px;font-weight:400;color:#444;letter-spacing:-0.184px;">1 из 5</div><div class="t" style="left:882.40px;top:676.91px;font-size:19px;line-height:19px;font-weight:700;color:#2f87c9;letter-spacing:0.565px;">актива без указанной</div><div class="t" style="left:882.40px;top:701.91px;font-size:19px;line-height:19px;font-weight:700;color:#2f87c9;letter-spacing:0.705px;">значимости</div><div class="t" style="left:908.60px;top:731.66px;font-size:18px;line-height:18px;font-weight:400;color:#2f87c9;letter-spacing:0.021px;">1 потенциально значимый</div><div class="t" style="left:882.40px;top:827.46px;font-size:18px;line-height:18px;font-weight:400;color:#2f87c9;letter-spacing:0.107px;">актива всего:</div><div class="t" style="left:1226.00px;top:586.75px;font-size:16px;line-height:16px;font-weight:400;color:#999;letter-spacing:-1.098px;">60</div><div class="t" style="left:1226.00px;top:655.45px;font-size:16px;line-height:16px;font-weight:400;color:#999;letter-spacing:-1.098px;">40</div><div class="t" style="left:1226.00px;top:722.15px;font-size:16px;line-height:16px;font-weight:400;color:#999;letter-spacing:-1.098px;">20</div><div class="t" style="left:1217.80px;top:799.05px;font-size:16px;line-height:16px;font-weight:400;color:#999;letter-spacing:-0.588px;">25 сен</div><div class="t" style="left:1308.93px;top:799.05px;font-size:16px;line-height:16px;font-weight:400;color:#999;letter-spacing:0.000px;">00:00</div><div class="t" style="left:1305.84px;top:818.15px;font-size:16px;line-height:16px;font-weight:400;color:#999;letter-spacing:0.000px;">09 окт</div><div class="t" style="left:1415.63px;top:799.05px;font-size:16px;line-height:16px;font-weight:400;color:#999;letter-spacing:0.000px;">00:00</div><div class="t" style="left:1412.54px;top:818.15px;font-size:16px;line-height:16px;font-weight:400;color:#999;letter-spacing:0.000px;">23 окт</div><div class="t" style="left:1521.93px;top:799.05px;font-size:16px;line-height:16px;font-weight:400;color:#999;letter-spacing:0.000px;">00:00</div><div class="t" style="left:1518.01px;top:818.15px;font-size:16px;line-height:16px;font-weight:400;color:#999;letter-spacing:0.000px;">06 ноя</div><div class="t" style="left:1610.00px;top:799.05px;font-size:16px;line-height:16px;font-weight:400;color:#999;letter-spacing:-0.395px;clip-path:inset(-5px 3px -5px -5px);">20 ноя</div><div class="t" style="left:1735.70px;top:582.06px;font-size:18px;line-height:18px;font-weight:400;color:#2f87c9;letter-spacing:-0.508px;">Атака</div><div class="t" style="left:2150.50px;top:797.96px;font-size:18px;line-height:18px;font-weight:400;color:#2f87c9;letter-spacing:-0.558px;">Атака</div><div class="t" style="left:2149.50px;top:819.76px;font-size:18px;line-height:18px;font-weight:400;color:#999;letter-spacing:-0.478px;">1 (100%)</div><div class="t" style="left:107.50px;top:962.81px;font-size:19px;line-height:19px;font-weight:700;color:#444;letter-spacing:0.534px;">Нет активов с неактуальными</div><div class="t" style="left:108.50px;top:986.81px;font-size:19px;line-height:19px;font-weight:700;color:#444;letter-spacing:0.422px;">данными сканирования</div><div class="t" style="left:32.80px;top:1055.96px;font-size:18px;line-height:18px;font-weight:400;color:#444;letter-spacing:-0.216px;">Аудит</div><div class="t" style="left:637.20px;top:1055.96px;font-size:18px;line-height:18px;font-weight:400;color:#444;letter-spacing:-0.057px;">Пентест</div><div class="t" style="left:33.60px;top:1160.86px;font-size:18px;line-height:18px;font-weight:400;color:#999;letter-spacing:0.000px;">У</div><div class="t" style="left:48.30px;top:1160.86px;font-size:18px;line-height:18px;font-weight:400;color:#2f87c9;letter-spacing:0.102px;">42 активов</div><div class="t" style="left:143.50px;top:1160.86px;font-size:18px;line-height:18px;font-weight:400;color:#999;letter-spacing:-0.439px;">не определена ОС.</div><div class="t" style="left:35.20px;top:1198.76px;font-size:18px;line-height:18px;font-weight:400;color:#999;letter-spacing:-1.347px;clip-path:inset(-10px -10px 9.8px -10px);">Для</div><div class="t" style="left:71.20px;top:1198.76px;font-size:18px;line-height:18px;font-weight:400;color:#2f87c9;letter-spacing:0.024px;clip-path:inset(-10px -10px 9.8px -10px);">42 активов</div><div class="t" style="left:165.70px;top:1198.76px;font-size:18px;line-height:18px;font-weight:400;color:#999;letter-spacing:-0.117px;clip-path:inset(-10px -10px 9.8px -10px);">не собраны данные для расчета уязвимостей</div><div class="t" style="left:1359.20px;top:958.41px;font-size:17px;line-height:17px;font-weight:400;color:#444;letter-spacing:-0.150px;">активов не соответствуют</div><div class="t" style="left:1300.10px;top:1036.40px;font-size:15px;line-height:15px;font-weight:400;color:#999;letter-spacing:0.245px;">1.2</div><div class="t" style="left:1312.80px;top:1132.30px;font-size:15px;line-height:15px;font-weight:400;color:#999;letter-spacing:0.000px;">0</div><div class="t" style="left:1319.15px;top:1152.30px;font-size:15px;line-height:15px;font-weight:400;color:#999;letter-spacing:0.000px;">10 сен</div><div class="t" style="left:1488.40px;top:1152.30px;font-size:15px;line-height:15px;font-weight:400;color:#999;letter-spacing:0.000px;">00:00</div><div class="t" style="left:1484.65px;top:1171.30px;font-size:15px;line-height:15px;font-weight:400;color:#999;letter-spacing:0.000px;">20 сен</div><div class="t" style="left:1654.50px;top:1152.30px;font-size:15px;line-height:15px;font-weight:400;color:#999;letter-spacing:0.000px;">00:00</div><div class="t" style="left:1650.75px;top:1171.30px;font-size:15px;line-height:15px;font-weight:400;color:#999;letter-spacing:0.000px;">30 сен</div><div class="t" style="left:1820.60px;top:1152.30px;font-size:15px;line-height:15px;font-weight:400;color:#999;letter-spacing:0.000px;">00:00</div><div class="t" style="left:1817.24px;top:1171.30px;font-size:15px;line-height:15px;font-weight:400;color:#999;letter-spacing:0.000px;">10 окт</div><div class="t" style="left:1985.20px;top:1152.30px;font-size:15px;line-height:15px;font-weight:400;color:#999;letter-spacing:0.000px;">00:00</div><div class="t" style="left:1982.34px;top:1171.30px;font-size:15px;line-height:15px;font-weight:400;color:#999;letter-spacing:0.000px;">20 окт</div><div class="t" style="left:2151.20px;top:1152.30px;font-size:15px;line-height:15px;font-weight:400;color:#999;letter-spacing:0.000px;">00:00</div><div class="t" style="left:2148.34px;top:1171.30px;font-size:15px;line-height:15px;font-weight:400;color:#999;letter-spacing:0.000px;">30 окт</div><div class="t" style="left:2317.30px;top:1152.30px;font-size:15px;line-height:15px;font-weight:400;color:#999;letter-spacing:0.000px;">00:00</div><div class="t" style="left:2313.16px;top:1171.30px;font-size:15px;line-height:15px;font-weight:400;color:#999;letter-spacing:0.000px;">09 ноя</div><div class="t" style="left:2481.26px;top:1152.30px;font-size:15px;line-height:15px;font-weight:400;color:#999;letter-spacing:0.000px;">19 ноя</div>
</body></html>
